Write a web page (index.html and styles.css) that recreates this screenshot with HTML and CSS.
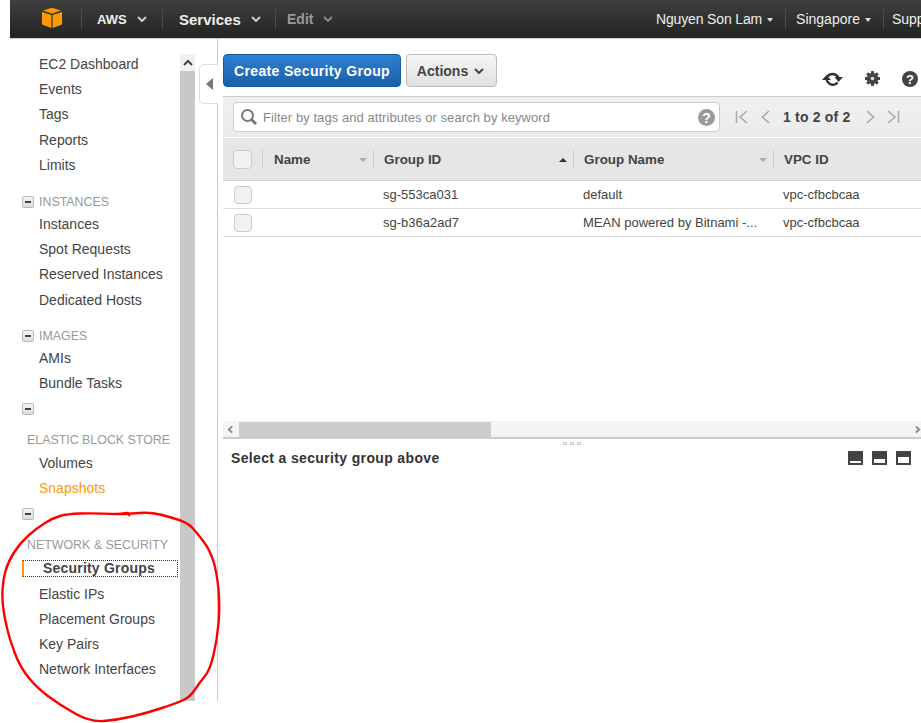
FILE: index.html
```html
<!DOCTYPE html>
<html>
<head>
	<meta charset="utf-8">
	<title>Security Groups</title>
	<link rel="stylesheet" href="styles.css">
</head>
<body>
	<header class="topbar">
		<div class="top-left">
			<div class="top-cell logo-cell">
				<svg class="logo" width="22" height="22" viewBox="0 0 22 22"><path fill="#f90" d="M1 5 10.400 8V21L1 17.500zM21 5 11.600 8V21L21 17.500zM2 3.600 11 .8 20 3.600 11 6.600z"/></svg>
			</div>
			<div class="top-cell aws-cell">AWS<svg class="chev" width="10" height="6" viewBox="0 0 10 6"><path d="M1 1 5 5 9 1" fill="none" stroke="#ccc" stroke-width="2"/></svg></div>
			<div class="top-cell services-cell">Services<svg class="chev" width="10" height="6" viewBox="0 0 10 6"><path d="M1 1 5 5 9 1" fill="none" stroke="#ccc" stroke-width="2"/></svg></div>
			<div class="top-cell edit-cell">Edit<svg class="chev" width="10" height="6" viewBox="0 0 10 6"><path d="M1 1 5 5 9 1" fill="none" stroke="#888" stroke-width="2"/></svg></div>
		</div>
		<div class="top-right">
			<div class="top-link user-cell">Nguyen Son Lam<span class="caret"></span></div>
			<div class="top-link region-cell">Singapore<span class="caret"></span></div>
			<div class="top-link support-cell">Support</div>
		</div>
	</header>

	<div class="page">
		<nav class="sidebar">
			<div class="nav-scroll">
				<ul class="nav-list first-list">
					<li>EC2 Dashboard</li>
					<li>Events</li>
					<li>Tags</li>
					<li>Reports</li>
					<li>Limits</li>
				</ul>
				<div class="nav-head"><span class="minus"></span>INSTANCES</div>
				<ul class="nav-list">
					<li>Instances</li>
					<li>Spot Requests</li>
					<li>Reserved Instances</li>
					<li>Dedicated Hosts</li>
				</ul>
				<div class="nav-head images-head"><span class="minus"></span>IMAGES</div>
				<ul class="nav-list">
					<li>AMIs</li>
					<li>Bundle Tasks</li>
				</ul>
				<div class="nav-toggle"><span class="minus"></span></div>
				<div class="nav-head wide">ELASTIC BLOCK STORE</div>
				<ul class="nav-list">
					<li>Volumes</li>
					<li class="orange">Snapshots</li>
				</ul>
				<div class="nav-toggle"><span class="minus"></span></div>
				<div class="nav-head wide">NETWORK &amp; SECURITY</div>
				<ul class="nav-list">
					<li class="current">Security Groups</li>
					<li>Elastic IPs</li>
					<li>Placement Groups</li>
					<li>Key Pairs</li>
					<li>Network Interfaces</li>
				</ul>
				<div class="nav-toggle last-toggle"><span class="minus"></span></div>
			</div>
			<div class="nav-track">
				<div class="nav-up"><svg width="10" height="7" viewBox="0 0 10 7"><path d="M1 6 5 2 9 6" fill="none" stroke="#444" stroke-width="2"/></svg></div>
			</div>
		</nav>

		<div class="collapse-col">
			<div class="collapse-tab"><svg width="7" height="12" viewBox="0 0 7 12"><path d="M7 0V12L0 6z" fill="#777"/></svg></div>
		</div>

		<main class="main">
			<div class="toolbar">
				<button class="btn btn-blue">Create Security Group</button>
				<button class="btn btn-grey">Actions<svg class="chev" width="10" height="6" viewBox="0 0 10 6"><path d="M1 1 5 5 9 1" fill="none" stroke="#444" stroke-width="2"/></svg></button>
				<div class="tool-icons">
					<svg class="refresh" width="21" height="15" viewBox="0 0 21 15"><path d="M5.500 4.500C7.500 1.500 13 .5 16.500 5.500M15.500 10.500C13.500 13.500 8 14.500 4.500 8" fill="none" stroke="#333" stroke-width="2.400"/><path d="M12.500 5H21L16.500 10zM0 8H9L4.500 3z" fill="#333"/></svg>
					<svg width="15" height="15" viewBox="0 0 16 16"><circle cx="8" cy="8" r="4.400" fill="none" stroke="#444" stroke-width="3.600"/><path d="M8 0V16M0 8H16M2.300 2.300 13.700 13.700M13.700 2.300 2.300 13.700" stroke="#444" stroke-width="3"/><circle cx="8" cy="8" r="1.900" fill="#ddd"/></svg>
					<svg width="16" height="16" viewBox="0 0 17 17"><circle cx="8.500" cy="8.500" r="8.500" fill="#444"/><text x="8.500" y="13.500" class="q-mark">?</text></svg>
				</div>
			</div>

			<div class="filter-bar">
				<div class="filter-box">
					<svg width="18" height="18" viewBox="0 0 18 18"><circle cx="7.500" cy="7.500" r="5.500" fill="none" stroke="#777" stroke-width="2"/><path d="M11.500 11.500 16 16" stroke="#777" stroke-width="3"/></svg>
					<span class="filter-text">Filter by tags and attributes or search by keyword</span>
					<svg class="filter-help" width="17" height="17" viewBox="0 0 17 17"><circle cx="8.500" cy="8.500" r="8.500" fill="#999"/><text x="8.500" y="13.500" class="q-mark">?</text></svg>
				</div>
				<div class="pager">
					<svg width="13" height="14" viewBox="0 0 13 14"><path d="M1.500 1V13M12 1 5 7 12 13" fill="none" stroke="#aaa" stroke-width="1.600"/></svg>
					<svg class="pager-prev" width="9" height="14" viewBox="0 0 9 14"><path d="M8 1 1.500 7 8 13" fill="none" stroke="#aaa" stroke-width="1.600"/></svg>
					<span class="pager-text">1 to 2 of 2</span>
					<svg class="pager-next" width="9" height="14" viewBox="0 0 9 14"><path d="M1 1 7.500 7 1 13" fill="none" stroke="#aaa" stroke-width="1.600"/></svg>
					<svg width="13" height="14" viewBox="0 0 13 14"><path d="M11.500 1V13M1 1 8 7 1 13" fill="none" stroke="#aaa" stroke-width="1.600"/></svg>
				</div>
			</div>

			<div class="table-wrap">
				<div class="t-row t-head">
					<div class="t-check"><span class="check big"></span></div>
					<div class="t-col col-name">Name<span class="sort"></span></div>
					<div class="t-col col-id">Group ID<span class="sort up"></span></div>
					<div class="t-col col-group">Group Name<span class="sort"></span></div>
					<div class="t-col col-vpc">VPC ID</div>
				</div>
				<div class="t-row t-body">
					<div class="t-check"><span class="check"></span></div>
					<div class="t-col col-name"></div>
					<div class="t-col col-id">sg-553ca031</div>
					<div class="t-col col-group">default</div>
					<div class="t-col col-vpc">vpc-cfbcbcaa</div>
				</div>
				<div class="t-row t-body">
					<div class="t-check"><span class="check"></span></div>
					<div class="t-col col-name"></div>
					<div class="t-col col-id">sg-b36a2ad7</div>
					<div class="t-col col-group">MEAN powered by Bitnami -...</div>
					<div class="t-col col-vpc">vpc-cfbcbcaa</div>
				</div>
			</div>

			<div class="h-scroll">
				<svg width="7" height="9" viewBox="0 0 7 9"><path d="M6 1 2 4.500 6 8" fill="none" stroke="#888" stroke-width="2"/></svg>
				<div class="h-track"><div class="h-thumb"></div></div>
				<svg width="7" height="9" viewBox="0 0 7 9"><path d="M1 1 5 4.500 1 8" fill="none" stroke="#888" stroke-width="2"/></svg>
			</div>

			<div class="splitter"><i></i><i></i><i></i></div>

			<div class="detail">
				<span class="detail-title">Select a security group above</span>
				<div class="pane-icons">
					<span class="pane"><b class="pane-a"></b></span>
					<span class="pane"><b class="pane-b"></b></span>
					<span class="pane"><b class="pane-c"></b></span>
				</div>
			</div>
		</main>
	</div>

	<svg class="scribble" width="921" height="723" viewBox="0 0 921 723">
		<path d="M118 514Q93 513 80 513.500Q67 514 60 516Q53 518 45 523Q37 528 28.500 535.500Q20 543 14 552.500Q8 562 5.500 571Q3 580 2.500 590Q2 600 3.500 610Q5 620 7.500 630Q10 640 15 653.500Q20 667 28.500 677.500Q37 688 48.500 696.500Q60 705 75 713.500Q90 722 103.500 721Q117 720 132 716.500Q147 713 162 708Q177 703 183.500 700Q190 697 195 689.500Q200 682 205 676Q210 670 213.500 655Q217 640 218.500 623.500Q220 607 218.500 590Q217 573 213.500 561.500Q210 550 203.500 541.500Q197 533 192.500 528Q188 523 179 520Q170 517 160 514.500Q150 512 139 513Q128 514 118 514L128 513 130 516" fill="none" stroke="#f00" stroke-width="2.400" stroke-linejoin="round"/>
	</svg>
</body>
</html>
```

FILE: styles.css
```css
html, body{
	margin: 0px;
	padding: 0px;
	width: 921px;
	height: 723px;
	overflow: hidden;
	background: #fff;
	font-family: "Liberation Sans", Arial, sans-serif;
	color: #444;
}

ul{
	list-style: none;
	margin: 0px;
	padding: 0px;
}

/* top bar */
.topbar{
	display: flex;
	justify-content: space-between;
	margin-left: 10px;
	height: 38px;
	background: linear-gradient(#3f3f3f, #232323);
	border-bottom: 1px solid #ccc;
	overflow: hidden;
	white-space: nowrap;
}

.top-left, .top-right{
	display: flex;
	align-items: center;
}

.top-right{
	flex: none;
	width: 265px;
}

.top-cell{
	display: flex;
	align-items: center;
	height: 20px;
	font-size: 14px;
	font-weight: bold;
	color: #eee;
	border-right: 1px solid #4d4d4d;
}

.logo-cell{
	width: 40px;
	padding-left: 31px;
}

.logo{
	margin-bottom: 2px;
}

.aws-cell{
	width: 65px;
	padding-left: 15px;
	font-size: 13px;
}

.services-cell{
	width: 96px;
	padding-left: 16px;
	font-size: 15px;
}

.edit-cell{
	padding-left: 11px;
	border-right: 0px;
	color: #999;
}

.chev{
	margin-left: 10px;
}

.top-link{
	display: flex;
	align-items: center;
	height: 20px;
	font-size: 14px;
	color: #eee;
}

.user-cell{
	padding-right: 12px;
	letter-spacing: -0.150px;
	border-right: 1px solid #4d4d4d;
}

.region-cell{
	padding: 0px 12px 0px 10px;
	border-right: 1px solid #4d4d4d;
}

.support-cell{
	padding-left: 8px;
}

.caret{
	margin: 1px 0px 0px 5px;
	border-top: 4px solid #ddd;
	border-left: 3.500px solid transparent;
	border-right: 3.500px solid transparent;
}

/* page below the bar */
.page{
	display: flex;
	height: 662px;
}

.sidebar{
	display: flex;
	flex: none;
	width: 185px;
	margin-left: 10px;
	height: 662px;
	overflow: hidden;
}

.nav-scroll{
	width: 170px;
	flex: none;
	padding-top: 13px;
	box-sizing: border-box;
	overflow: hidden;
	font-size: 14px;
}

.nav-list li{
	height: 25.200px;
	line-height: 25.200px;
	padding-left: 29px;
	color: #444;
}

.nav-list li.orange{
	color: #f90;
}

.nav-list li.current{
	height: 17px;
	line-height: 15px;
	margin: 5px 2px 4.400px 12px;
	padding-left: 19px;
	box-sizing: border-box;
	font-weight: bold;
	letter-spacing: 0.200px;
	border: 1px dotted #333;
	border-left: 2px solid #f90;
}

.nav-head{
	display: flex;
	align-items: center;
	height: 20px;
	font-size: 12.400px;
	color: #999;
	margin-top: 14px;
	padding-left: 12px;
}

.nav-head.images-head{
	margin-top: 13px;
}

.nav-head.wide{
	padding-left: 17px;
	margin-top: 11px;
	margin-bottom: 1px;
}

.nav-toggle{
	display: flex;
	align-items: center;
	height: 20px;
	margin-top: 3px;
	padding-left: 12px;
}

.nav-toggle.last-toggle{
	margin-top: 15px;
}

.minus{
	display: block;
	position: relative;
	flex: none;
	width: 10px;
	height: 10px;
	margin-right: 5px;
	background: linear-gradient(#f4f4f4, #ddd);
	border: 1px solid #bbb;
	border-radius: 2px;
}

.minus:before{
	content: "";
	position: absolute;
	left: 2px;
	top: 4px;
	width: 6px;
	height: 2px;
	background: #444;
}

.nav-track{
	width: 15px;
	flex: none;
	margin-top: 15px;
	background: #c8c8c8;
}

.nav-up{
	display: flex;
	align-items: center;
	justify-content: center;
	height: 17px;
	background: #f1f1f1;
}

.collapse-col{
	flex: none;
	width: 22px;
	margin-right: 5px;
	border-right: 1px solid #ccc;
}

.collapse-tab{
	display: flex;
	align-items: center;
	justify-content: center;
	box-sizing: border-box;
	width: 19px;
	height: 40px;
	margin: 25px 0px 0px 4px;
	border: 1px solid #ddd;
	border-right: 0px;
	border-radius: 5px 0px 0px 5px;
	background: #fff;
}

/* main column, runs past the right edge */
.main{
	flex: none;
	width: 698px;
}

.toolbar{
	display: flex;
	align-items: flex-start;
	height: 57px;
	padding-top: 15px;
	box-sizing: border-box;
}

.btn{
	display: flex;
	align-items: center;
	justify-content: center;
	height: 33px;
	padding: 0px;
	font-family: inherit;
	font-size: 14px;
	font-weight: bold;
	border-radius: 4px;
}

.btn-blue{
	width: 178px;
	color: #fff;
	background: linear-gradient(#2d80d4, #1a5fa8);
	border: 1px solid #185a9e;
	letter-spacing: 0.350px;
}

.btn-grey{
	width: 91px;
	margin-left: 5px;
	padding-right: 2px;
	color: #444;
	background: linear-gradient(#f6f6f6, #e0e0e0);
	border: 1px solid #bbb;
}

.btn-grey .chev{
	margin-left: 6px;
}

.tool-icons{
	display: flex;
	align-items: center;
	gap: 22px;
	margin: 16px 0px 0px auto;
	padding-right: 3px;
}

.refresh{
	margin-top: 2px;
}

.q-mark{
	font-family: "Liberation Sans", Arial, sans-serif;
	font-size: 14px;
	font-weight: bold;
	fill: #fff;
	text-anchor: middle;
}

.filter-bar{
	display: flex;
	align-items: center;
	height: 41px;
	box-sizing: border-box;
	background: linear-gradient(#f0f0f0, #ebebeb);
	border-top: 1px solid #ccc;
	padding-left: 10px;
}

.filter-box{
	display: flex;
	align-items: center;
	box-sizing: border-box;
	width: 487px;
	height: 30px;
	padding: 0px 4px 0px 6px;
	background: #fff;
	border: 1px solid #ccc;
	border-radius: 4px;
}

.filter-text{
	margin-left: 5px;
	font-size: 13px;
	letter-spacing: 0.060px;
	color: #888;
}

.filter-help{
	margin-left: auto;
}

.pager{
	display: flex;
	align-items: center;
	margin-left: 15px;
}

.pager-prev{
	margin-left: 13px;
}

.pager-text{
	margin: 0px 15px 0px 13px;
	font-size: 14px;
	font-weight: bold;
	letter-spacing: 0.200px;
	color: #444;
}

.pager-next{
	margin-right: 12px;
}

.table-wrap{
	height: 283px;
	border-top: 1px solid #fff;
}

.t-row{
	display: flex;
	align-items: center;
}

.t-head{
	height: 43px;
	box-sizing: border-box;
	background: #e6e6e6;
	border-bottom: 1px solid #ccc;
	font-size: 13.400px;
	font-weight: bold;
	color: #444;
}

.t-body{
	height: 28px;
	box-sizing: border-box;
	border-bottom: 1px solid #ddd;
	font-size: 13px;
	color: #444;
}

.t-check{
	flex: none;
	width: 39px;
	display: flex;
	padding-left: 11px;
	box-sizing: border-box;
}

.check{
	display: block;
	box-sizing: border-box;
	width: 18px;
	height: 18px;
	background: #f1f1f1;
	border: 1px solid #ccc;
	border-radius: 4px;
}

.check.big{
	width: 19px;
	height: 19px;
	margin-left: -1px;
}

.t-col{
	display: flex;
	align-items: center;
	flex: none;
	box-sizing: border-box;
	padding-left: 10px;
	white-space: nowrap;
}

.t-head .t-col{
	height: 18px;
	border-left: 1px solid #ccc;
}

.t-head .col-name{
	padding-left: 11px;
}

.col-name{
	width: 111px;
}

.col-id, .col-group{
	width: 200px;
}

.col-vpc{
	width: 120px;
}

.sort{
	margin: 1px 6px 0px auto;
	border-top: 4px solid #aaa;
	border-left: 4px solid transparent;
	border-right: 4px solid transparent;
}

.sort.up{
	border-top: 0px;
	border-bottom: 4px solid #333;
}

.h-scroll{
	display: flex;
	align-items: center;
	height: 16px;
	background: #f4f4f4;
	border-bottom: 2px solid #ccc;
	padding-left: 4px;
}

.h-track{
	flex: none;
	width: 676px;
	height: 15px;
	margin-left: 6px;
}

.h-thumb{
	width: 252px;
	height: 15px;
	background: #ccc;
}

.splitter{
	display: flex;
	justify-content: center;
	gap: 3px;
	height: 3px;
	padding-top: 3px;
}

.splitter i{
	display: block;
	width: 4px;
	height: 3px;
	box-sizing: border-box;
	border: 1px solid #ccc;
}

.detail{
	display: flex;
	align-items: center;
	justify-content: space-between;
	height: 26px;
	padding: 0px 10px 0px 8px;
}

.detail-title{
	font-size: 14px;
	font-weight: bold;
	letter-spacing: 0.350px;
	color: #333;
}

.pane-icons{
	display: flex;
	gap: 9px;
}

.pane{
	display: flex;
	align-items: flex-end;
	justify-content: center;
	box-sizing: border-box;
	width: 15px;
	height: 14px;
	padding: 0px 2px 2px 2px;
	background: #444;
}

.pane b{
	display: block;
	width: 100%;
	background: #fff;
}

.pane-a{
	height: 2px;
}

.pane-b{
	height: 4px;
}

.pane-c{
	height: 6px;
}

.scribble{
	position: absolute;
	left: 0px;
	top: 0px;
	pointer-events: none;
}
```
